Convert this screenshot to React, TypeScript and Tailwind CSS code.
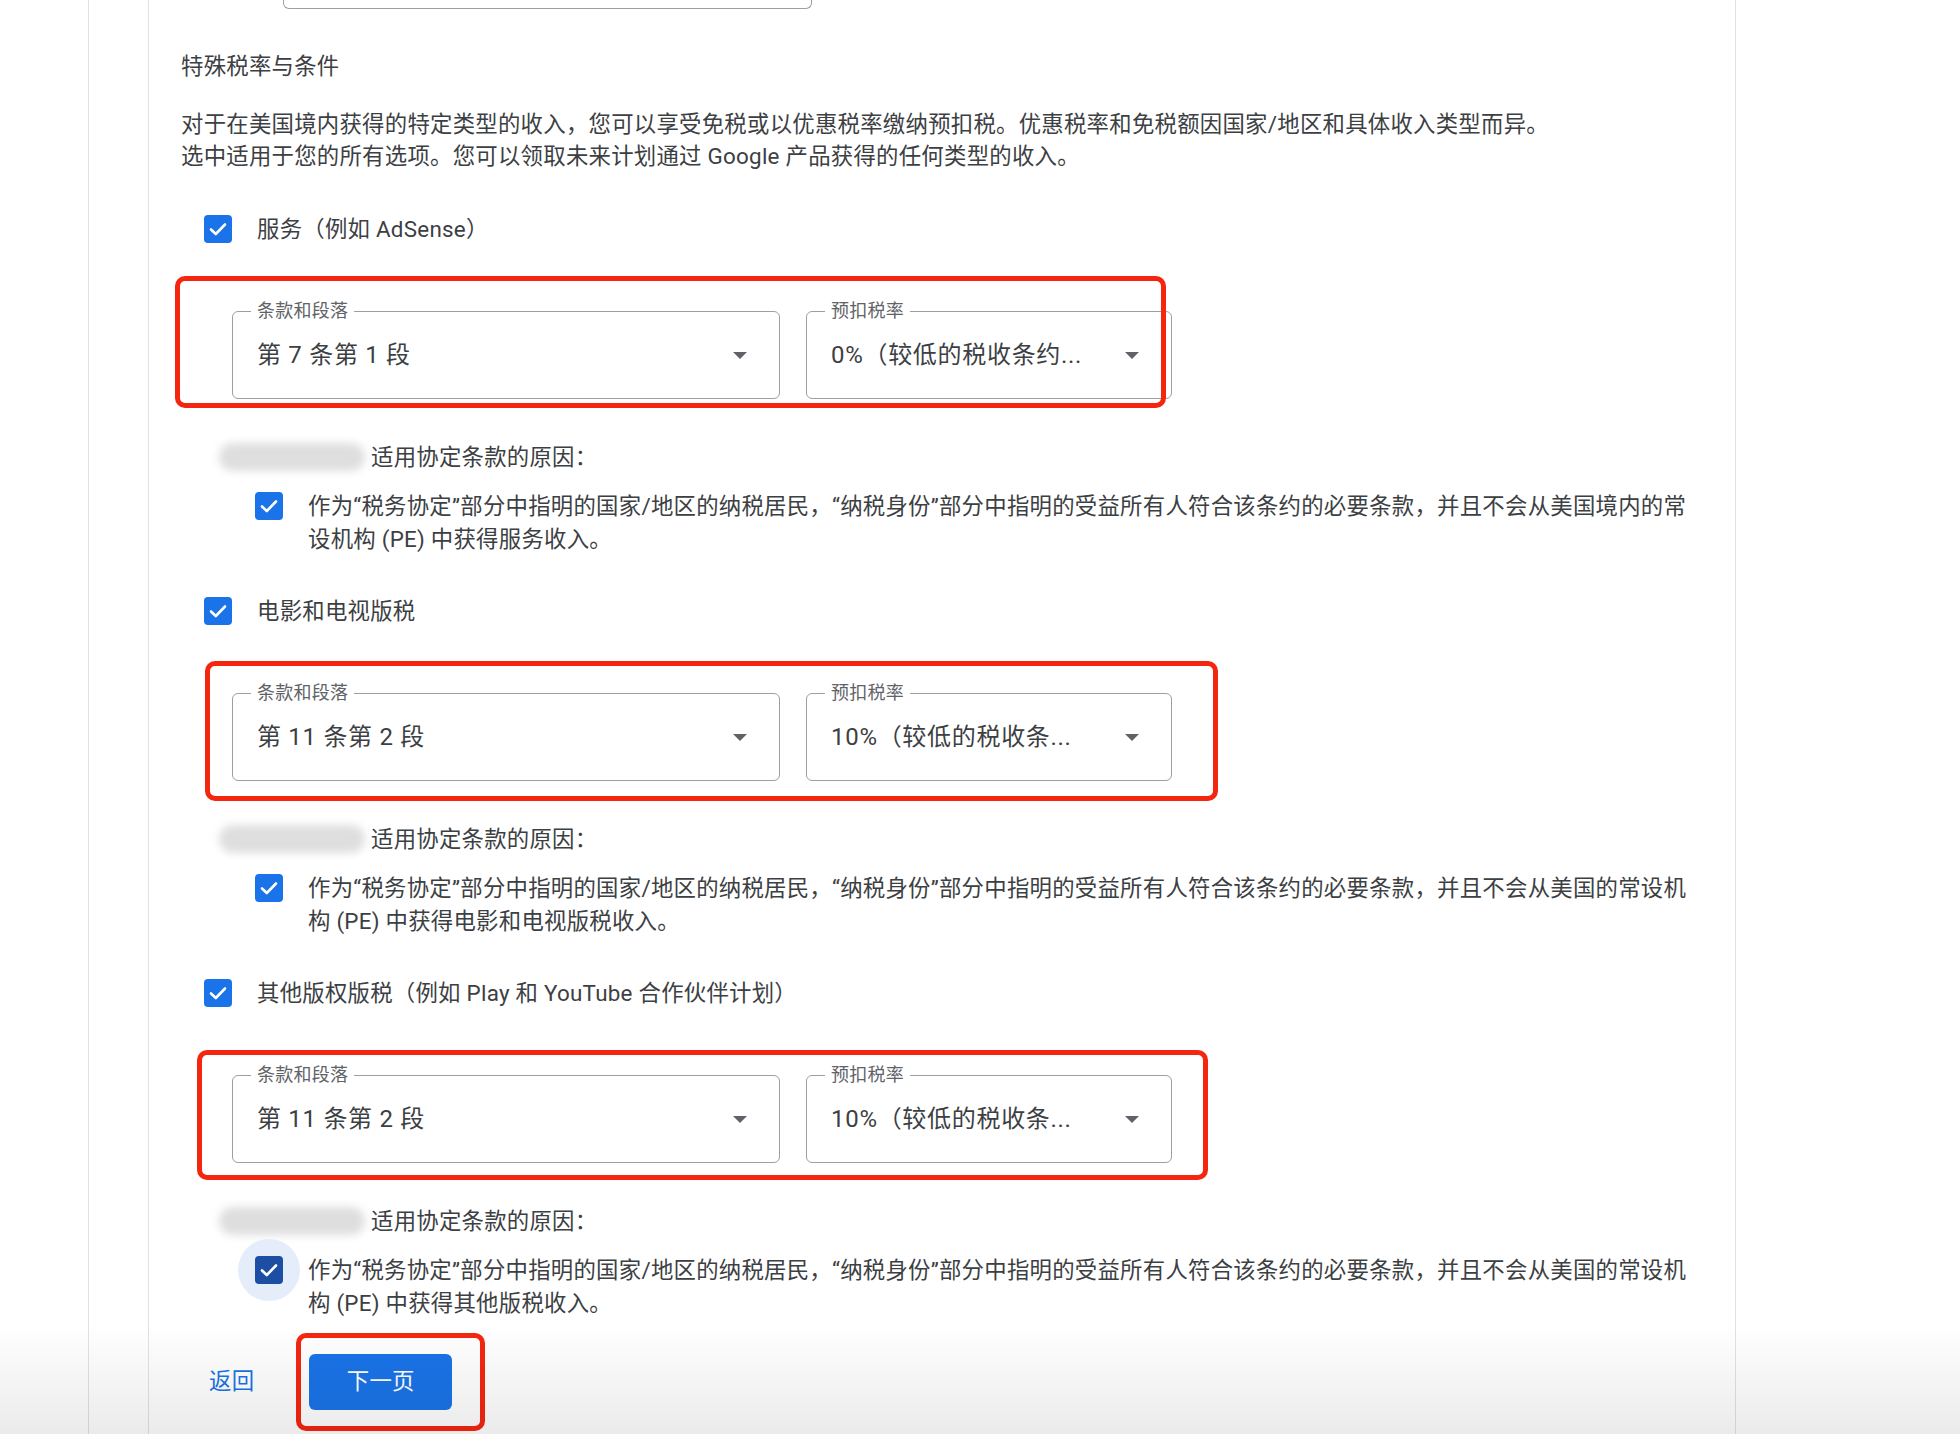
import React from "react";

type Item = {
  label: string;
  clause: string;
  rate: string;
  reason: [string, string];
  mark: string;
  focused?: boolean;
};

const items: Item[] = [
  {
    label: "服务（例如 AdSense）",
    clause: "第 7 条第 1 段",
    rate: "0%（较低的税收条约...",
    reason: [
      "作为“税务协定”部分中指明的国家/地区的纳税居民，“纳税身份”部分中指明的受益所有人符合该条约的必要条款，并且不会从美国境内的常",
      "设机构 (PE) 中获得服务收入。",
    ],
    mark: "left-[-57px] top-[-35px] w-[991px] h-[132px]",
  },
  {
    label: "电影和电视版税",
    clause: "第 11 条第 2 段",
    rate: "10%（较低的税收条...",
    reason: [
      "作为“税务协定”部分中指明的国家/地区的纳税居民，“纳税身份”部分中指明的受益所有人符合该条约的必要条款，并且不会从美国的常设机",
      "构 (PE) 中获得电影和电视版税收入。",
    ],
    mark: "left-[-27px] top-[-32px] w-[1013px] h-[140px]",
  },
  {
    label: "其他版权版税（例如 Play 和 YouTube 合作伙伴计划）",
    clause: "第 11 条第 2 段",
    rate: "10%（较低的税收条...",
    reason: [
      "作为“税务协定”部分中指明的国家/地区的纳税居民，“纳税身份”部分中指明的受益所有人符合该条约的必要条款，并且不会从美国的常设机",
      "构 (PE) 中获得其他版税收入。",
    ],
    mark: "left-[-35px] top-[-25px] w-[1011px] h-[130px]",
    focused: true,
  },
];

function Checkbox({ dark }: { dark?: boolean }) {
  return (
    <span
      className={`flex h-[28px] w-[28px] shrink-0 items-center justify-center rounded-[4px] ${
        dark ? "bg-[#1c4ea3]" : "bg-[#1a73e8]"
      }`}
    >
      <svg width="24" height="24" viewBox="0 0 24 24" fill="none">
        <polyline points="5,12.5 9.8,17 19,7.5" stroke="white" strokeWidth="2.6" strokeLinecap="round" strokeLinejoin="round" />
      </svg>
    </span>
  );
}

function Select({ label, value, width }: { label: string; value: string; width: string }) {
  return (
    <div className={`relative h-[88px] ${width} rounded-[6px] border border-[#9aa0a6]`}>
      {/* floating label sits on the outline */}
      <span className="absolute left-[18px] top-[-12px] bg-white px-[6px] text-[18px] leading-[22px] text-[#5f6368]">
        {label}
      </span>
      <div className="flex h-full items-center pl-[24px] pr-[32px]">
        <span className="flex-1 whitespace-nowrap text-[24px] tracking-[0.7px] text-[#3c4043]">{value}</span>
        <svg width="14" height="7" viewBox="0 0 14 7">
          <polygon points="0,0 14,0 7,7" fill="#5f6368" />
        </svg>
      </div>
    </div>
  );
}

function Block({ item, first }: { item: Item; first: boolean }) {
  return (
    <div className={first ? "mt-[41px]" : "mt-[39px]"}>
      <div className="flex h-[32px] items-center gap-[25px] pl-[23px]">
        <Checkbox />
        <span className="leading-[32px]">{item.label}</span>
      </div>

      <div className="relative ml-[51px] mt-[66px] flex gap-[26px]">
        <Select label="条款和段落" value={item.clause} width="w-[548px]" />
        <Select label="预扣税率" value={item.rate} width="w-[366px]" />
        {/* red annotation frame */}
        <div className={`pointer-events-none absolute ${item.mark} rounded-[10px] border-[5px] border-[#f5260f]`} />
      </div>

      <div className="mt-[42px] flex h-[32px] items-center gap-[6px] pl-[38px]">
        <div className="h-[28px] w-[146px] rounded-full bg-[#dedede] blur-[4px]" />
        <span className="leading-[32px]">适用协定条款的原因：</span>
      </div>

      <div className="mt-[17px] flex gap-[25px] pl-[74px]">
        <div className="relative mt-[2px] h-[28px] w-[28px] shrink-0">
          {item.focused && (
            <div className="absolute left-[-17px] top-[-17px] h-[62px] w-[62px] rounded-full bg-[#e6edfa]" />
          )}
          <div className="relative">
            <Checkbox dark={item.focused} />
          </div>
        </div>
        <p className="leading-[33px]">
          {item.reason[0]}
          <br />
          {item.reason[1]}
        </p>
      </div>
    </div>
  );
}

export default function App() {
  return (
    <div className="relative h-[1434px] w-[1960px] overflow-hidden bg-white pl-[88px] font-[Roboto,'Noto_Sans_CJK_SC',sans-serif] text-[22.4px] tracking-[0.25px] text-[#3c4043]">
      <div className="h-full border-l border-[#e2e2e2] pl-[59px]">
        <div className="h-full w-[1588px] border-x border-[#e2e2e2] px-[32px]">
          {/* bottom of the field above, cut off by the scroll */}
          <div className="ml-[102px] h-[9px] w-[529px] rounded-b-[6px] border border-t-0 border-[#9aa0a6]" />

          <h2 className="mt-[41px] text-[22.4px] font-normal leading-[32px] text-[#3c4043]">特殊税率与条件</h2>
          <p className="mt-[26px] leading-[32px]">
            对于在美国境内获得的特定类型的收入，您可以享受免税或以优惠税率缴纳预扣税。优惠税率和免税额因国家/地区和具体收入类型而异。
            <br />
            选中适用于您的所有选项。您可以领取未来计划通过 Google 产品获得的任何类型的收入。
          </p>

          {items.map((item, i) => (
            <Block key={i} item={item} first={i === 0} />
          ))}

          <div className="mt-[34px] flex items-center gap-[55px] pl-[28px]">
            <button className="text-[22.4px] text-[#1a73e8]">返回</button>
            <div className="relative">
              <button className="h-[56px] w-[143px] rounded-[6px] bg-[#1a73e8] text-[22.4px] text-white">下一页</button>
              <div className="pointer-events-none absolute left-[-13px] top-[-21px] h-[98px] w-[189px] rounded-[10px] border-[5px] border-[#f5260f]" />
            </div>
          </div>
        </div>
      </div>

      {/* sticky footer shade */}
      <div className="pointer-events-none absolute inset-x-0 bottom-0 h-[110px] bg-gradient-to-b from-transparent to-black/[0.08]" />
    </div>
  );
}
